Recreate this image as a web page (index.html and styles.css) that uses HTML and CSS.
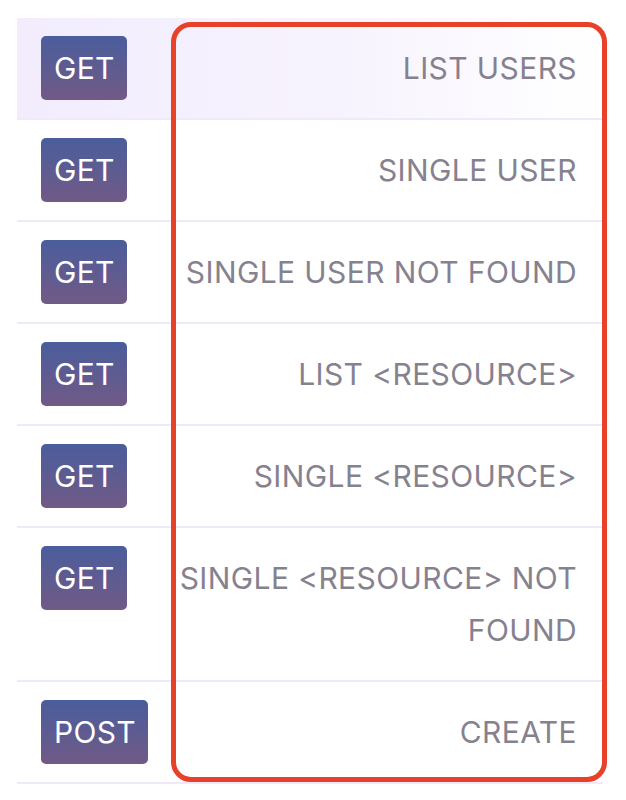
FILE: index.html
```html
<!DOCTYPE html>
<html>
<head>
<meta charset="utf-8">
<link rel="stylesheet" href="styles.css">
</head>
<body>
<div class="page">
  <table class="endpoints">
    <tr class="row active">
      <td class="method"><span class="badge">GET</span></td>
      <td class="name">LIST USERS</td>
    </tr>
    <tr class="row">
      <td class="method"><span class="badge">GET</span></td>
      <td class="name">SINGLE USER</td>
    </tr>
    <tr class="row">
      <td class="method"><span class="badge">GET</span></td>
      <td class="name">SINGLE USER NOT FOUND</td>
    </tr>
    <tr class="row">
      <td class="method"><span class="badge">GET</span></td>
      <td class="name">LIST &lt;RESOURCE&gt;</td>
    </tr>
    <tr class="row">
      <td class="method"><span class="badge">GET</span></td>
      <td class="name">SINGLE &lt;RESOURCE&gt;</td>
    </tr>
    <tr class="row">
      <td class="method"><span class="badge">GET</span></td>
      <td class="name">SINGLE &lt;RESOURCE&gt; NOT FOUND</td>
    </tr>
    <tr class="row">
      <td class="method"><span class="badge">POST</span></td>
      <td class="name">CREATE</td>
    </tr>
  </table>
  <div class="highlight"></div>
</div>
</body>
</html>
```

FILE: styles.css
```css
html, body {
  margin: 0;
  padding: 0;
  background: #ffffff;
}

.page {
  position: relative;
  padding: 18px 23px 0 17px;
  font-family: Inter, "Noto Sans", "Liberation Sans", sans-serif;
}

.endpoints {
  width: 586px;
  border-collapse: collapse;
  border-spacing: 0;
}

.row td {
  border-bottom: 2px solid #efe9fb;
  vertical-align: top;
}

.row.active {
  background: linear-gradient(to right, #f2ecfd 0%, #f7f3fe 55%, #ffffff 100%);
}

.method {
  width: 108px;
  padding: 18px 16px 18px 24px;
}

.badge {
  display: inline-block;
  height: 64px;
  line-height: 65px;
  padding: 0 12px 0 13px;
  border-radius: 5px;
  background: linear-gradient(to bottom, #4a5d9c 0%, #715a86 100%);
  color: #ffffff;
  font-size: 30px;
  letter-spacing: 0.3px;
  font-weight: 400;
}

.name {
  padding: 24px 26px 24px 4px;
  text-align: right;
  font-size: 30px;
  letter-spacing: 0.4px;
  line-height: 52px;
  color: #86818f;
}

.highlight {
  position: absolute;
  left: 171px;
  top: 22px;
  width: 426px;
  height: 750px;
  border: 5px solid #e8412a;
  border-radius: 20px;
  pointer-events: none;
}
```
